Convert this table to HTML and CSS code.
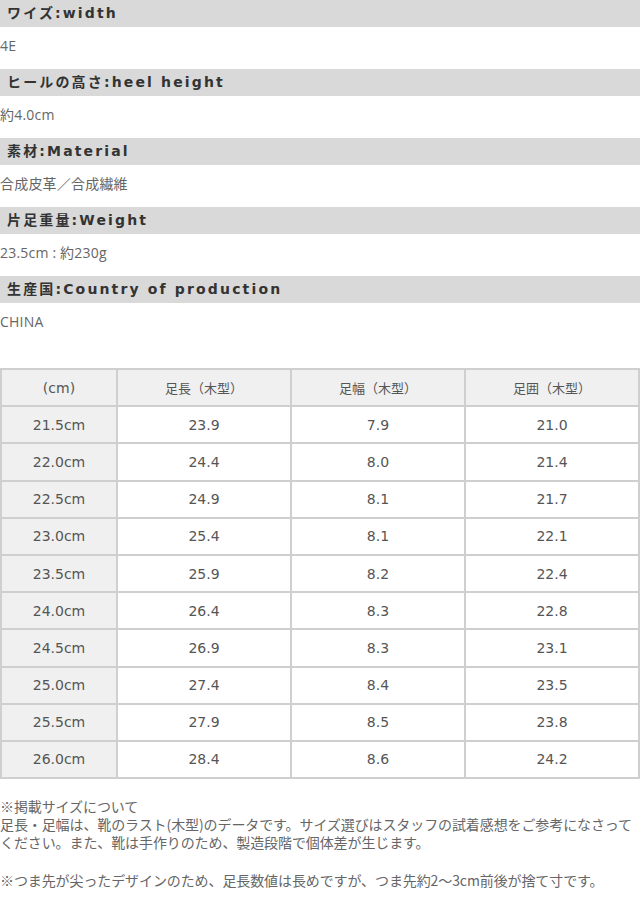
FILE: index.html
```html
<!DOCTYPE html>
<html lang="ja">
<head>
<meta charset="utf-8">
<link rel="stylesheet" href="styles.css">
</head>
<body>
<div class="specs">
  <h3 class="spec-title">ワイズ:width</h3>
  <p class="spec-value">4E</p>
  <h3 class="spec-title">ヒールの高さ:heel height</h3>
  <p class="spec-value">約4.0cm</p>
  <h3 class="spec-title">素材:Material</h3>
  <p class="spec-value">合成皮革／合成繊維</p>
  <h3 class="spec-title">片足重量:Weight</h3>
  <p class="spec-value">23.5cm : 約230g</p>
  <h3 class="spec-title">生産国:Country of production</h3>
  <p class="spec-value">CHINA</p>
</div>
<table class="size-table">
  <thead>
    <tr><th>(cm)</th><th>足長（木型）</th><th>足幅（木型）</th><th>足囲（木型）</th></tr>
  </thead>
  <tbody>
    <tr><th>21.5cm</th><td>23.9</td><td>7.9</td><td>21.0</td></tr>
    <tr><th>22.0cm</th><td>24.4</td><td>8.0</td><td>21.4</td></tr>
    <tr><th>22.5cm</th><td>24.9</td><td>8.1</td><td>21.7</td></tr>
    <tr><th>23.0cm</th><td>25.4</td><td>8.1</td><td>22.1</td></tr>
    <tr><th>23.5cm</th><td>25.9</td><td>8.2</td><td>22.4</td></tr>
    <tr><th>24.0cm</th><td>26.4</td><td>8.3</td><td>22.8</td></tr>
    <tr><th>24.5cm</th><td>26.9</td><td>8.3</td><td>23.1</td></tr>
    <tr><th>25.0cm</th><td>27.4</td><td>8.4</td><td>23.5</td></tr>
    <tr><th>25.5cm</th><td>27.9</td><td>8.5</td><td>23.8</td></tr>
    <tr><th>26.0cm</th><td>28.4</td><td>8.6</td><td>24.2</td></tr>
  </tbody>
</table>
<div class="notes">
  <p class="note"><span class="note-line">※掲載サイズについて</span><span class="note-line">足長・足幅は、靴のラスト(木型)のデータです。サイズ選びはスタッフの試着感想をご参考になさって</span><span class="note-line">ください。また、靴は手作りのため、製造段階で個体差が生じます。</span></p>
  <p class="note"><span class="note-line">※つま先が尖ったデザインのため、足長数値は長めですが、つま先約2～3cm前後が捨て寸です。</span></p>
</div>
</body>
</html>
```

FILE: styles.css
```css
html, body {
  margin: 0;
  padding: 0;
  background: #ffffff;
}
body {
  width: 640px;
  font-family: "DejaVu Sans", "Noto Sans CJK JP", sans-serif;
  color: #555;
}
.specs {
  display: flex;
  flex-direction: column;
}
.spec-title {
  margin: 0;
  height: 27px;
  line-height: 27px;
  padding-left: 7px;
  background: #d9d9d9;
  color: #333;
  font-size: 14px;
  font-weight: bold;
  letter-spacing: 2.15px;
}
.spec-value {
  margin: 0;
  height: 42px;
  line-height: 38px;
  font-size: 14px;
  color: #666;
  font-family: "Open Sans", "Noto Sans CJK JP", sans-serif;
  letter-spacing: 0.2px;
}
.size-table {
  margin-top: 23px;
  margin-left: 0;
  width: 640px;
  border-collapse: collapse;
  table-layout: fixed;
  font-size: 14px;
  color: #555;
}
.size-table th, .size-table td {
  border: 2px solid #cfcfcf;
  height: 35.2px;
  padding: 0;
  text-align: center;
  font-weight: normal;
}
.size-table thead th {
  background: #f0f0f0;
  font-family: "Noto Sans CJK JP", sans-serif;
  font-size: 13px;
}
.size-table thead th:first-child {
  font-family: "DejaVu Sans", sans-serif;
  font-size: 14px;
}
.size-table tbody th {
  background: #f0f0f0;
}
.size-table th:nth-child(1) { width: 114px; }
.size-table th:nth-child(2) { width: 172px; }
.size-table th:nth-child(3) { width: 172px; }
.notes {
  margin-top: 18px;
  font-family: "Noto Sans CJK JP", sans-serif;
  font-size: 14px;
  line-height: 18px;
  color: #666;
  letter-spacing: -0.1px;
}
.note {
  margin: 0 0 20px 0;
  display: flex;
  flex-direction: column;
}
.note-line {
  display: block;
  height: 18px;
  white-space: nowrap;
}
```
